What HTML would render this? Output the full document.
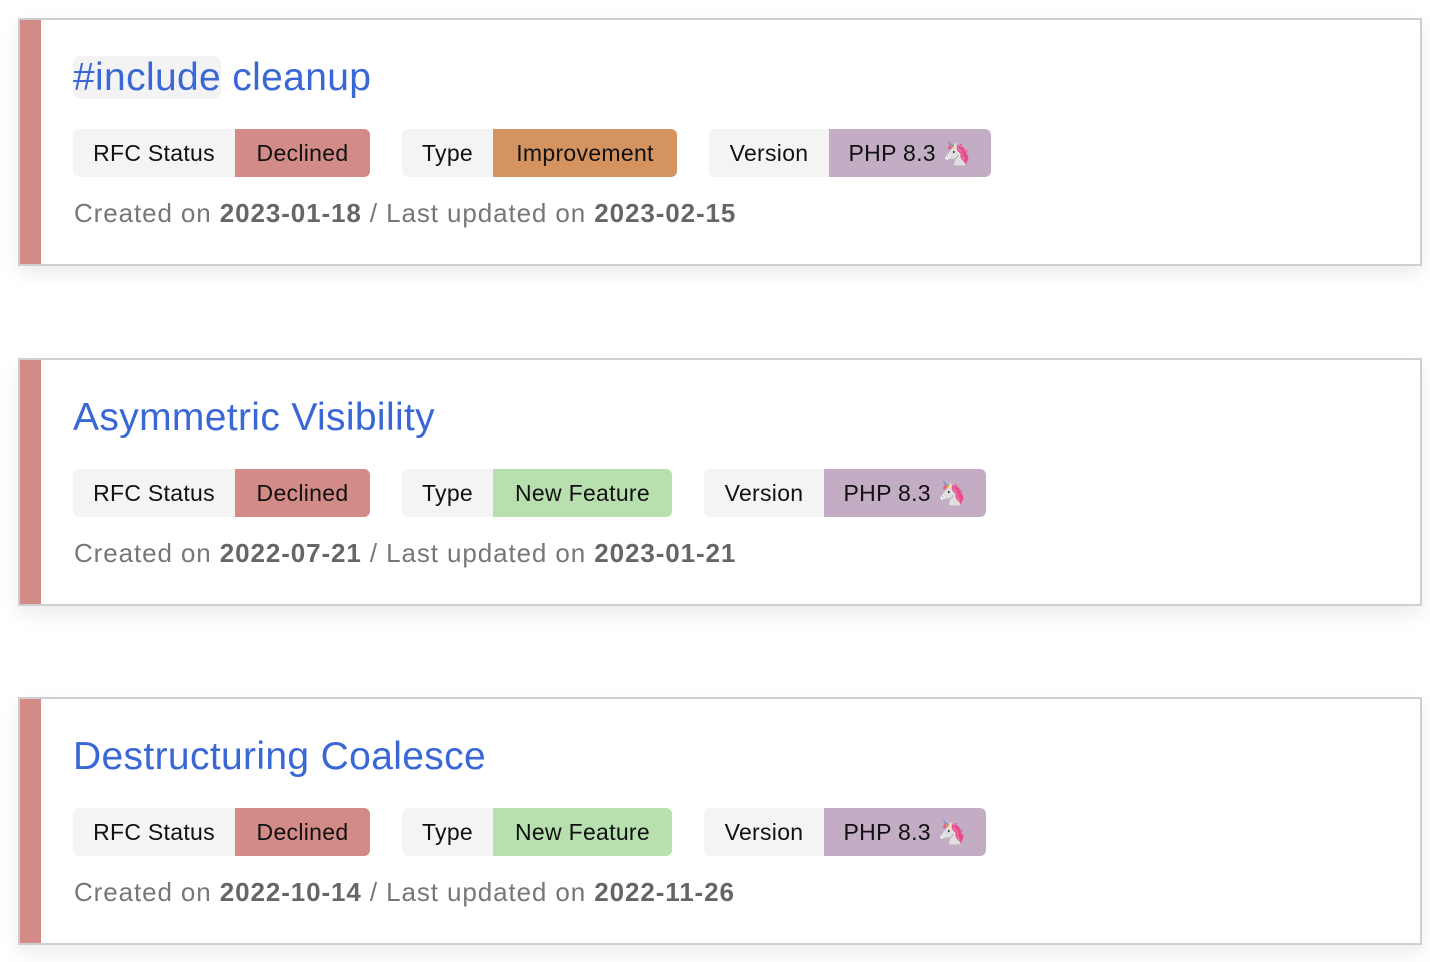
<!DOCTYPE html>
<html><head><meta charset="utf-8"><style>
*{box-sizing:border-box;margin:0;padding:0}
body{width:1430px;height:962px;background:#fff;font-family:"Liberation Sans",sans-serif;position:relative;overflow:hidden}
.card{position:absolute;left:18px;width:1404px;height:248px;border:2px solid #cfcfcf;background:#fff;box-shadow:0 8px 18px rgba(0,0,0,0.08)}
.bar{position:absolute;left:0;top:0;bottom:0;width:21px;background:#d38b88}
.title{position:absolute;left:53px;top:34px;font-size:39px;color:#3a67d6;line-height:48px;white-space:nowrap;letter-spacing:0.35px}
.title .hl{background:#f3f3f3;border-radius:8px}
.tags{position:absolute;left:53px;top:109px;height:48px;display:flex}
.tag{display:flex;height:48px;margin-right:32px;border-radius:6px;overflow:hidden;font-size:23px;line-height:48px;color:#111;letter-spacing:0.3px}
.tag span{display:block;text-align:center;white-space:nowrap}
.l{background:#f4f4f4}
.dec{background:#d38b88}
.imp{background:#d4935f}
.nf{background:#b7e0ae}
.ver{background:#c3adc4}
.date{position:absolute;left:54px;top:178px;font-size:26px;color:#777;white-space:nowrap;letter-spacing:0.9px}
.date b{color:#666}
</style></head><body>

<div class="card" style="top:18px"><div class="bar"></div>
<div class="title"><span class="hl">#include</span> cleanup</div>
<div class="tags">
<div class="tag"><span class="l" style="width:162px">RFC Status</span><span class="dec" style="width:135px">Declined</span></div>
<div class="tag"><span class="l" style="width:91px">Type</span><span class="imp" style="width:184px">Improvement</span></div>
<div class="tag"><span class="l" style="width:120px">Version</span><span class="ver" style="width:162px">PHP 8.3 🦄</span></div>
</div>
<div class="date">Created on <b>2023-01-18</b> / Last updated on <b>2023-02-15</b></div>
</div>

<div class="card" style="top:358px"><div class="bar"></div>
<div class="title">Asymmetric Visibility</div>
<div class="tags">
<div class="tag"><span class="l" style="width:162px">RFC Status</span><span class="dec" style="width:135px">Declined</span></div>
<div class="tag"><span class="l" style="width:91px">Type</span><span class="nf" style="width:179px">New Feature</span></div>
<div class="tag"><span class="l" style="width:120px">Version</span><span class="ver" style="width:162px">PHP 8.3 🦄</span></div>
</div>
<div class="date">Created on <b>2022-07-21</b> / Last updated on <b>2023-01-21</b></div>
</div>

<div class="card" style="top:697px"><div class="bar"></div>
<div class="title">Destructuring Coalesce</div>
<div class="tags">
<div class="tag"><span class="l" style="width:162px">RFC Status</span><span class="dec" style="width:135px">Declined</span></div>
<div class="tag"><span class="l" style="width:91px">Type</span><span class="nf" style="width:179px">New Feature</span></div>
<div class="tag"><span class="l" style="width:120px">Version</span><span class="ver" style="width:162px">PHP 8.3 🦄</span></div>
</div>
<div class="date">Created on <b>2022-10-14</b> / Last updated on <b>2022-11-26</b></div>
</div>

</body></html>
